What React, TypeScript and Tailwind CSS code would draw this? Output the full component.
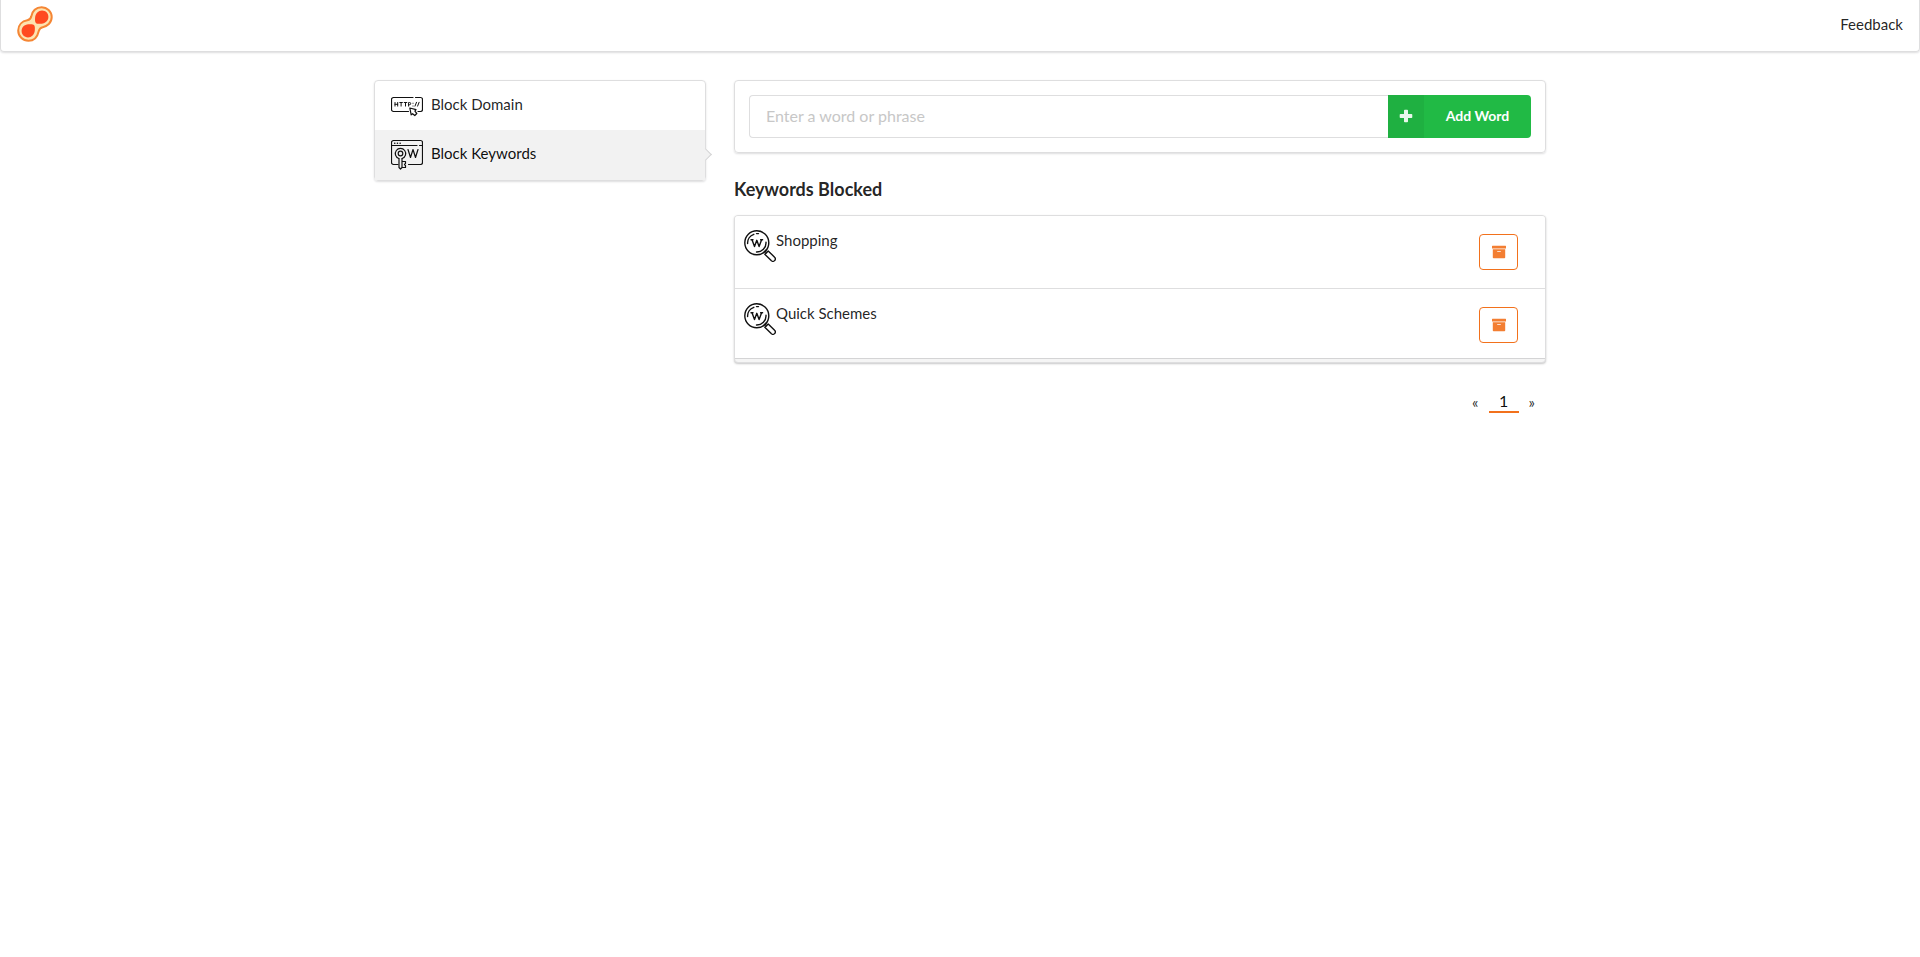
import React, { useState } from "react";

interface IconProps {
  className?: string;
}

const Logo = ({ className }: IconProps): JSX.Element => (
  <svg className={className} viewBox="0 0 36 36" fill="none">
    <path
      d="M24.500 1.200a10 10 0 0 1 10.200 9.800c0 6-4.600 9.400-9 10.200-2.500.5-3.300 1.500-4 4-1.200 5.400-4.700 9.600-10.200 9.600A10.300 10.300 0 0 1 1.200 24.500c0-5.700 3.900-9.300 9.100-10.200 2.500-.4 3.500-1.500 4-4C15.200 5.200 19 1.200 24.500 1.200z"
      fill="#fde3b0"
      stroke="#f58634"
      strokeWidth="2"
    />
    <path
      d="M25 4.600c3.800 0 6.400 2.800 6.400 6.200 0 3.900-2.800 6.500-6.800 6.900-2.500.2-4.700.2-5.700-.7-1-1-1-3.300-.8-5.500.4-4 3.300-6.900 6.900-6.900z"
      fill="#ff4a20"
    />
    <path
      d="M11 31.400c-3.700 0-6.400-2.800-6.400-6.300 0-3.900 2.800-6.400 6.800-6.800 2.500-.2 4.600-.3 5.600.6 1 1 1 3.300.8 5.500-.4 4.100-3.200 7-6.800 7z"
      fill="#ff4a20"
    />
  </svg>
);

const DomainIcon = ({ className }: IconProps): JSX.Element => (
  <svg
    className={className}
    viewBox="0 0 32 32"
    fill="none"
    stroke="#111"
    strokeWidth="1.200"
    strokeLinecap="round"
    strokeLinejoin="round"
  >
    <path d="M17.500 21.500h-15a2 2 0 0 1-2-2v-10a2 2 0 0 1 2-2H22M24.500 7.500h5a2 2 0 0 1 2 2v10a2 2 0 0 1-2 2H27" />
    <path
      d="M4 12.500v3.600M6.700 12.500v3.600M4 14.300h2.700M8.800 12.500h2.600M10.100 12.500v3.600M13.200 12.500h2.600M14.500 12.500v3.600M17.600 16.100v-3.600h1a1.100 1.100 0 0 1 0 2.200h-1M22 13.200v.1M22 16v.1M24 16.100l1.500-3.800M26.600 16.100l1.500-3.800"
      strokeWidth="1"
    />
    <path
      d="M18.800 18l6.200 1.600-1.100 1.600 1.900 2.300-2 2-2.200-1.800-1.400 1.100z"
      fill="#fff"
    />
  </svg>
);

const KeywordIcon = ({ className }: IconProps): JSX.Element => (
  <svg
    className={className}
    viewBox="0 0 32 32"
    fill="none"
    stroke="#111"
    strokeWidth="1.200"
    strokeLinecap="round"
    strokeLinejoin="round"
  >
    <path d="M7 25.500H2.500a2 2 0 0 1-2-2v-20a2 2 0 0 1 2-2h27a2 2 0 0 1 2 2v20a2 2 0 0 1-2 2H17.500M.5 6.500H26M28.500 6.500h3" />
    <path d="M3.700 4.200h.1M6.400 4.200h.1M9.100 4.200h.1" strokeWidth="1.500" />
    <path d="M7.800 19.500a5.200 5.200 0 1 1 3.400 0" />
    <circle cx="9.500" cy="14.500" r="2.300" />
    <path d="M8 19.500v9l1.500 1.500 1.500-1.500v-9M11 22.500h3.500v2l-1 1 1 1v2H11" />
    <path d="M17 10.500l2.500 8 2.500-8 2.500 8 2.500-8" />
  </svg>
);

const SearchWordIcon = ({ className }: IconProps): JSX.Element => (
  <svg
    className={className}
    viewBox="0 0 32 32"
    fill="none"
    stroke="#111"
    strokeWidth="1.400"
    strokeLinecap="round"
    strokeLinejoin="round"
  >
    <circle cx="12.800" cy="12.800" r="12" />
    <path d="M3.600 13.500a9.200 9.200 0 0 1 6.200-9.200M12.500 3.600h2M22 12.300a9.200 9.200 0 0 1-9.500 9.700" />
    <path d="M8 9.800l2.500 6.700 2.300-6.200 2.300 6.200 2.500-6.700M7 9.800h2M16.600 9.800h2" />
    <path d="M19.600 22.600l3-3M21 21.200l1.600 1.600" />
    <path d="M20.800 24.300l3.400-3.400 6.400 6.300a2.300 2.300 0 0 1 0 3.400 2.300 2.300 0 0 1-3.400 0z" />
  </svg>
);

const PlusIcon = ({ className }: IconProps): JSX.Element => (
  <svg className={className} viewBox="0 0 14 14" fill="currentColor">
    <path d="M5 1.500a.8.8 0 0 1 .8-.8h2.400a.8.8 0 0 1 .8.800V5h3.500a.8.8 0 0 1 .8.800v2.400a.8.8 0 0 1-.8.800H9v3.500a.8.8 0 0 1-.8.800H5.800a.8.8 0 0 1-.8-.8V9H1.500a.8.8 0 0 1-.8-.8V5.800A.8.8 0 0 1 1.500 5H5z" />
  </svg>
);

const ArchiveIcon = ({ className }: IconProps): JSX.Element => (
  <svg className={className} viewBox="0 0 14 14" fill="currentColor">
    <path d="M.5.700h13a.5.500 0 0 1 .5.500v2.200H0V1.200A.5.500 0 0 1 .5.700z" />
    <path
      fillRule="evenodd"
      clipRule="evenodd"
      d="M.8 4.200h12.400v8.200a.8.800 0 0 1-.8.800H1.600a.8.800 0 0 1-.8-.8zM5.200 6v.800h3.600V6z"
    />
  </svg>
);

const menu = [
  { name: "Block Domain", icon: DomainIcon },
  { name: "Block Keywords", icon: KeywordIcon },
];

const Navbar = (): JSX.Element => (
  <header className="flex items-start justify-between h-[52px] px-4 pt-1.5 rounded-b border border-t-0 border-[#dededf] shadow-[0_1px_2px_0_rgba(34,36,38,0.15)]">
    <a href="#" aria-label="Home">
      <Logo className="w-9 h-9" />
    </a>
    <a href="#" className="pt-2">
      Feedback
    </a>
  </header>
);

const SideMenu = (): JSX.Element => {
  const [active, setActive] = useState("Block Keywords");

  return (
    <nav className="rounded border border-[#dededf] shadow-[0_1px_2px_0_rgba(34,36,38,0.15)]">
      {menu.map(({ name, icon: Icon }) => (
        <a
          key={name}
          href="#"
          onClick={() => setActive(name)}
          className={`relative flex items-center gap-2 h-[49px] last:h-[50px] px-4 ${
            active === name ? "bg-[#f2f2f2] text-black/95" : ""
          }`}
        >
          <Icon className="w-8 h-8 shrink-0" />
          <span className="pb-1">{name}</span>
          {active === name && (
            <span className="absolute -right-[5px] top-5 w-[9px] h-[9px] rotate-45 border-t border-r border-[#d4d4d5] bg-[#f2f2f2]" />
          )}
        </a>
      ))}
    </nav>
  );
};

const WordForm = ({ onAdd }: { onAdd: (word: string) => void }): JSX.Element => {
  const [value, setValue] = useState("");

  const handleSubmit = (e: React.FormEvent) => {
    e.preventDefault();
    if (!value.trim()) return;
    onAdd(value.trim());
    setValue("");
  };

  return (
    <form
      onSubmit={handleSubmit}
      className="flex p-3.5 rounded border border-[#dededf] shadow-[0_1px_2px_0_rgba(34,36,38,0.15)]"
    >
      <input
        type="text"
        aria-label="Word or phrase"
        placeholder="Enter a word or phrase"
        value={value}
        onChange={(e) => setValue(e.target.value)}
        className="flex-1 min-w-0 h-[43px] px-4 pb-0.5 text-base rounded-l border border-r-0 border-[#dededf] outline-none placeholder:text-[#c7c7c7]"
      />
      <button
        type="submit"
        className="flex items-center w-[143px] rounded-r overflow-hidden bg-[#21ba45] text-white text-sm font-bold"
      >
        <span className="flex items-center justify-center w-9 h-full pb-0.5 bg-black/5">
          <PlusIcon className="w-3.5 h-3.5 opacity-90" />
        </span>
        <span className="flex-1 pb-0.5">Add Word</span>
      </button>
    </form>
  );
};

const Pagination = (): JSX.Element => (
  <nav className="flex justify-end items-center gap-2.5 mt-7 pr-[11px]">
    <a href="#" aria-label="Previous page">
      «
    </a>
    <a
      href="#"
      className="w-[30px] text-center text-base leading-5 border-b-2 border-[#f2711c] text-black/95"
    >
      1
    </a>
    <a href="#" aria-label="Next page">
      »
    </a>
  </nav>
);

const App = (): JSX.Element => {
  const [words, setWords] = useState(["Shopping", "Quick Schemes"]);

  return (
    <div className="font-[Lato,sans-serif] text-[15px] leading-5 text-black/87">
      <Navbar />
      <div className="flex max-w-[1200px] mx-auto pt-7">
        <div className="w-[30%] px-3.5">
          <SideMenu />
        </div>
        <main className="w-[70%] px-3.5">
          <WordForm onAdd={(word) => setWords([...words, word])} />
          <h3 className="mt-6 mb-3.5 text-lg leading-6 font-bold">
            Keywords Blocked
          </h3>
          <div className="pb-[3px] rounded border border-[#dededf] bg-[#f5f5f5] overflow-hidden shadow-[0_1px_2px_0_rgba(34,36,38,0.25)]">
            <ul>
              {words.map((word) => (
                <li
                  key={word}
                  className="flex items-start h-[73px] pt-3.5 pl-[9px] pr-[27px] bg-white border-b border-[#dededf] last:h-[70px] last:border-[#d4d4d5]"
                >
                  <SearchWordIcon className="w-8 h-8" />
                  <span className="flex-1">{word}</span>
                  <button
                    aria-label={`Remove ${word}`}
                    onClick={() => setWords(words.filter((w) => w !== word))}
                    className="flex items-center justify-center w-[39px] h-9 mt-1 rounded border border-[#f2711c] text-[#f2711c]"
                  >
                    <ArchiveIcon className="w-3.5 h-3.5 opacity-90" />
                  </button>
                </li>
              ))}
            </ul>
          </div>
          <Pagination />
        </main>
      </div>
    </div>
  );
};

export default App;
